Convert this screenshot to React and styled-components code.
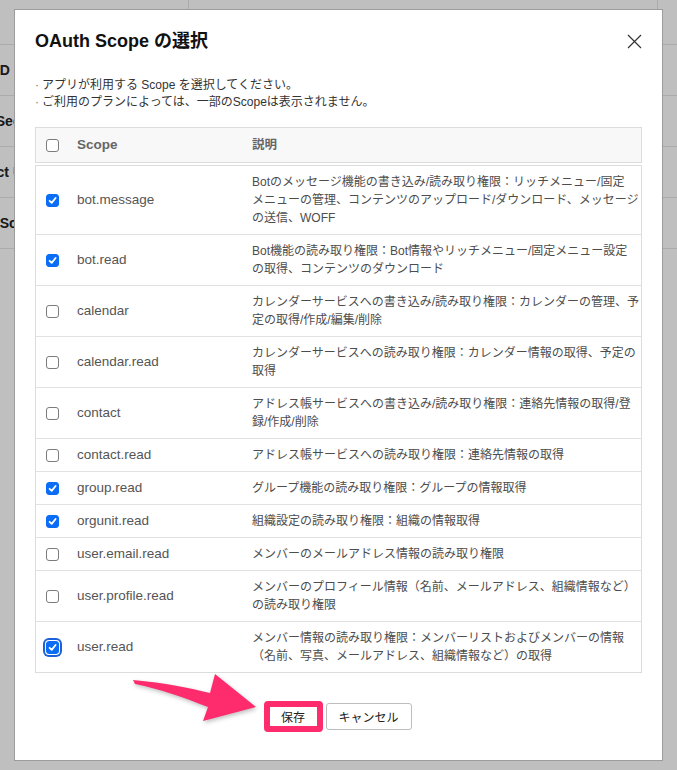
import React from 'react';
import styled, { createGlobalStyle } from 'styled-components';

const GlobalStyle = createGlobalStyle`
  html, body {
    margin: 0;
    padding: 0;
  }
  body {
    background: #fff;
    overflow: hidden;
    font-family: "Liberation Sans", "Noto Sans CJK JP", sans-serif;
  }
`;

const scopes = [
  {
    name: 'bot.message',
    checked: true,
    lines: [
      'Botのメッセージ機能の書き込み/読み取り権限：リッチメニュー/固定',
      'メニューの管理、コンテンツのアップロード/ダウンロード、メッセージ',
      'の送信、WOFF',
    ],
  },
  {
    name: 'bot.read',
    checked: true,
    lines: [
      'Bot機能の読み取り権限：Bot情報やリッチメニュー/固定メニュー設定',
      'の取得、コンテンツのダウンロード',
    ],
  },
  {
    name: 'calendar',
    lines: [
      'カレンダーサービスへの書き込み/読み取り権限：カレンダーの管理、予',
      '定の取得/作成/編集/削除',
    ],
  },
  {
    name: 'calendar.read',
    lines: ['カレンダーサービスへの読み取り権限：カレンダー情報の取得、予定の', '取得'],
  },
  {
    name: 'contact',
    lines: [
      'アドレス帳サービスへの書き込み/読み取り権限：連絡先情報の取得/登',
      '録/作成/削除',
    ],
  },
  { name: 'contact.read', lines: ['アドレス帳サービスへの読み取り権限：連絡先情報の取得'] },
  { name: 'group.read', checked: true, lines: ['グループ機能の読み取り権限：グループの情報取得'] },
  { name: 'orgunit.read', checked: true, lines: ['組織設定の読み取り権限：組織の情報取得'] },
  { name: 'user.email.read', lines: ['メンバーのメールアドレス情報の読み取り権限'] },
  {
    name: 'user.profile.read',
    lines: ['メンバーのプロフィール情報（名前、メールアドレス、組織情報など）', 'の読み取り権限'],
  },
  {
    name: 'user.read',
    checked: true,
    focused: true,
    lines: [
      'メンバー情報の読み取り権限：メンバーリストおよびメンバーの情報',
      '（名前、写真、メールアドレス、組織情報など）の取得',
    ],
  },
];

/* page behind the dialog, scrolled a little to the right */
const Page = styled.div`
  width: 780px;
  margin-left: -47px;
`;

const PageTopRow = styled.div`
  display: flex;
  height: 45px;
  box-sizing: border-box;
  border-bottom: 1px solid #e4e4e4;
`;

const PageTopCell = styled.div`
  width: ${(p) => p.$w}px;
  border-right: 1px solid #e4e4e4;
`;

const PageRow = styled.div`
  display: flex;
  align-items: center;
  height: 51px;
  box-sizing: border-box;
  border-bottom: 1px solid #e4e4e4;
  font-size: 14px;
  font-weight: bold;
  color: #222;
`;

const Overlay = styled.div`
  position: fixed;
  inset: 0;
  background: rgba(0, 0, 0, 0.25);
`;

const Modal = styled.div`
  position: fixed;
  left: 14px;
  top: 9px;
  width: 649px;
  box-sizing: border-box;
  background: #fff;
  border: 1px solid #9c9c9c;
  padding: 0 20px 30px;
`;

const ModalHeader = styled.div`
  display: flex;
  align-items: center;
  justify-content: space-between;
  padding-top: 19px;
`;

const Title = styled.h2`
  margin: 0;
  font-size: 18px;
  line-height: 24px;
  font-weight: bold;
  color: #111;
`;

const CloseButton = styled.button`
  width: 16px;
  height: 16px;
  padding: 0;
  border: none;
  background: none;
  display: flex;
  align-items: center;
  justify-content: center;
`;

const Intro = styled.div`
  margin-top: 24px;
  font-size: 12px;
  line-height: 17px;
  color: #333;
`;

const IntroLine = styled.div`
  display: flex;
  &::before {
    content: '·';
    width: 7px;
    color: #777;
  }
`;

const Table = styled.div`
  margin-top: 16px;
`;

const HeadRow = styled.div`
  display: grid;
  grid-template-columns: 31px 175px 1fr;
  height: 36px;
  box-sizing: border-box;
  background: #f8f8f8;
  border: 1px solid #dcdcdc;
`;

const Body = styled.div`
  margin-top: 2px;
  border: 1px solid #dcdcdc;
`;

const Row = styled.div`
  display: grid;
  grid-template-columns: 31px 175px 1fr;
  & + & {
    border-top: 1px solid #e2e2e2;
  }
`;

const Cell = styled.div`
  display: flex;
  align-items: center;
  padding: 7px 0 7px 10px;
  line-height: 18px;
`;

const HeadCell = styled(Cell)`
  font-weight: bold;
  color: #666;
  font-size: ${(p) => (p.$jp ? '12.5px' : '13.5px')};
`;

const ScopeName = styled(Cell)`
  font-size: 13.5px;
  color: #555;
`;

const Desc = styled(Cell)`
  font-size: 12px;
  color: #4d4d4d;
  white-space: nowrap;
`;

const Box = styled.span`
  width: 13px;
  height: 13px;
  box-sizing: border-box;
  border-radius: 3px;
  display: inline-flex;
  align-items: center;
  justify-content: center;
  border: 1px solid ${(p) => (p.$checked ? '#0b6df6' : '#7c7c7c')};
  background: ${(p) => (p.$checked ? '#0b6df6' : '#fff')};
  box-shadow: ${(p) => (p.$focus ? '0 0 0 1px #fff, 0 0 0 3px #1c62d6' : 'none')};
`;

const Footer = styled.div`
  display: flex;
  justify-content: center;
  gap: 5px;
  margin-top: 30px;
`;

const Button = styled.button`
  height: 27px;
  width: ${(p) => p.$w}px;
  padding: 0;
  box-sizing: border-box;
  border: 1px solid #bdbdbd;
  border-radius: 3px;
  background: #fff;
  color: #222;
  font-family: "Noto Sans CJK JP", sans-serif;
  font-size: 12px;
  position: relative;
`;

const SaveButton = styled(Button)`
  &::after {
    content: '';
    position: absolute;
    inset: -3px;
    border: 6px solid #fe2c6d;
    border-radius: 4px;
  }
`;

const Arrow = styled.svg`
  position: fixed;
  left: 125px;
  top: 665px;
  width: 140px;
  height: 65px;
  overflow: visible;
  pointer-events: none;
  filter: drop-shadow(1px 2px 2px rgba(0, 0, 0, 0.25));
`;

function Checkbox({ checked, focus }) {
  return (
    <Box $checked={checked} $focus={focus}>
      {checked && (
        <svg width="9" height="9" viewBox="0 0 9 9">
          <path d="M1.6 4.8 L3.7 6.9 L7.6 2" fill="none" stroke="#fff" strokeWidth="1.8" strokeLinecap="round" strokeLinejoin="round" />
        </svg>
      )}
    </Box>
  );
}

export default function App() {
  return (
    <>
      <GlobalStyle />
      <Page>
        <PageTopRow>
          <PageTopCell $w={235} />
          <PageTopCell $w={468} />
        </PageTopRow>
        <PageRow>Client ID</PageRow>
        <PageRow>Client Secret</PageRow>
        <PageRow>Redirect URL</PageRow>
        <PageRow>OAuth Scopes</PageRow>
      </Page>
      <Overlay />
      <Modal>
        <ModalHeader>
          <Title>OAuth Scope の選択</Title>
          <CloseButton aria-label="close">
            <svg width="15" height="15" viewBox="0 0 15 15">
              <path d="M1 1 L14 14 M14 1 L1 14" stroke="#333" strokeWidth="1.2" />
            </svg>
          </CloseButton>
        </ModalHeader>
        <Intro>
          <IntroLine>アプリが利用する Scope を選択してください。</IntroLine>
          <IntroLine>ご利用のプランによっては、一部のScopeは表示されません。</IntroLine>
        </Intro>
        <Table>
          <HeadRow>
            <Cell>
              <Checkbox />
            </Cell>
            <HeadCell>Scope</HeadCell>
            <HeadCell $jp>説明</HeadCell>
          </HeadRow>
          <Body>
            {scopes.map((s) => (
              <Row key={s.name}>
                <Cell>
                  <Checkbox checked={s.checked} focus={s.focused} />
                </Cell>
                <ScopeName>{s.name}</ScopeName>
                <Desc>
                  <div>
                    {s.lines.map((l, i) => (
                      <React.Fragment key={i}>
                        {i > 0 && <br />}
                        {l}
                      </React.Fragment>
                    ))}
                  </div>
                </Desc>
              </Row>
            ))}
          </Body>
        </Table>
        <Footer>
          <SaveButton $w={55}>保存</SaveButton>
          <Button $w={86}>キャンセル</Button>
        </Footer>
      </Modal>
      <Arrow viewBox="0 0 140 65">
        <path
          d="M8 15 C40 18 65 23 85 28 L90 9 L131 42 L78 56 L83 42 C60 33 35 24 10 19 Z"
          fill="#fe2c6d"
        />
      </Arrow>
    </>
  );
}
